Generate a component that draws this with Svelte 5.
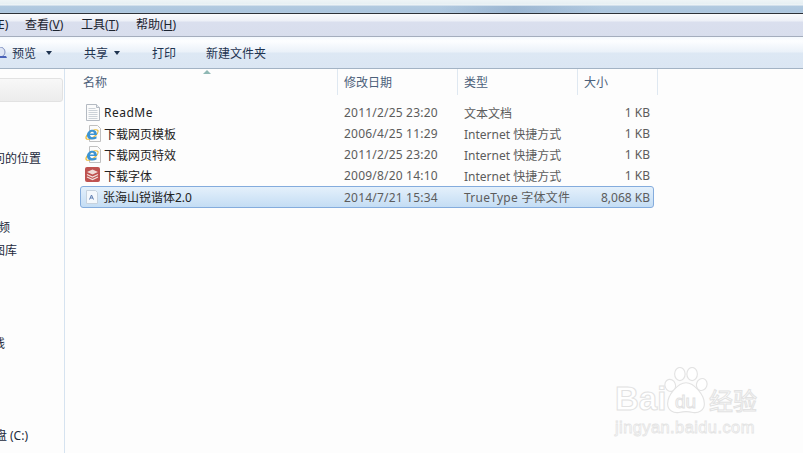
<script>
	// file list shown in the explorer pane
	let files = [
		{ name: 'ReadMe', date: '2011/2/25 23:20', type: '文本文档', size: '1 KB', icon: 'doc', latin: true },
		{ name: '下载网页模板', date: '2006/4/25 11:29', type: 'Internet 快捷方式', size: '1 KB', icon: 'ie' },
		{ name: '下载网页特效', date: '2011/2/25 23:20', type: 'Internet 快捷方式', size: '1 KB', icon: 'ie' },
		{ name: '下载字体', date: '2009/8/20 14:10', type: 'Internet 快捷方式', size: '1 KB', icon: 'rar' },
		{ name: '张海山锐谐体2.0', date: '2014/7/21 15:34', type: 'TrueType 字体文件', size: '8,068 KB', icon: 'font', selected: true }
	];

	// the window is cropped on the left, so nav labels start off-screen
	let nav = [
		{ label: '最近访问的位置', top: 150, width: 41 },
		{ label: '视频', top: 219, width: 10 },
		{ label: '图库', top: 242, width: 17 },
		{ label: '离线', top: 335, width: 5 },
		{ label: '本地磁盘 (C:)', top: 427, width: 28 }
	];
</script>

<div class="window">
	<div class="titlebar"></div>

	<div class="menubar">
		<span class="cut">E)</span>
		<span class="m1">查看(<u>V</u>)</span>
		<span class="m2">工具(<u>T</u>)</span>
		<span class="m3">帮助(<u>H</u>)</span>
	</div>

	<div class="toolbar">
		<svg class="preview" width="7" height="12" viewBox="0 0 7 12">
			<circle cx="0" cy="5" r="5" fill="#dfe6f4" stroke="#7f8fc0" />
			<path d="M-2 9h8l1 2h-9z" fill="#4a62b8" />
		</svg>
		<span class="t1">预览</span>
		<i class="caret c1"></i>
		<span class="t2">共享</span>
		<i class="caret c2"></i>
		<span class="t3">打印</span>
		<span class="t4">新建文件夹</span>
	</div>

	<div class="body">
		<aside class="sidebar">
			<div class="nav-head"></div>
			{#each nav as item}
				<div class="nav-item" style="top:{item.top - 69}px;width:{item.width}px">{item.label}</div>
			{/each}
		</aside>

		<section class="list">
			<svg class="sort" width="8" height="4" viewBox="0 0 8 4"><path d="M0 4 4 0l4 4z" fill="#8fb8b4" /></svg>
			<div class="header">
				<div class="col name">名称</div>
				<div class="col date">修改日期</div>
				<div class="col type">类型</div>
				<div class="col size">大小</div>
			</div>

			<div class="rows">
				{#each files as f}
					<div class="row" class:selected={f.selected}>
						<div class="cell name">
							<span class="icon">
								{#if f.icon === 'doc'}
									<svg width="16" height="17" viewBox="0 0 16 17">
										<path d="M1.5.5h10l3 3v13h-13z" fill="#fbfbfb" stroke="#b4bac2" />
										<path d="M11.5.5v3h3" fill="#e8ecf0" stroke="#b4bac2" />
										<path d="M3.5 4.5h7M3.5 6.5h9M3.5 8.5h9M3.5 10.5h9M3.5 12.5h9M3.5 14.500h9" stroke="#ccd2d8" />
									</svg>
								{:else if f.icon === 'ie'}
									<svg width="17" height="17" viewBox="0 0 17 17">
										<path d="M4.500.5h8l3 3v13h-11z" fill="#fcfcfc" stroke="#c0c0c0" />
										<ellipse cx="7" cy="9.500" rx="7" ry="3" fill="none" stroke="#e8bc40" stroke-width="1.300" transform="rotate(-35 7 9.500)" />
										<path d="M2 10C2.200 6.500 5 4.500 7.800 4.700 10.500 4.900 12 7 12 10H5C5.200 12.500 8.500 13 11.500 11.200V13.500C7.500 15.700 1.700 14.500 2 10zM5 8.500H9C8.900 6.300 5.200 6.300 5 8.500z" fill="#3c94d4" />
									</svg>
								{:else if f.icon === 'rar'}
									<svg width="16" height="16" viewBox="0 0 16 16">
										<rect x="0" y="0" width="15" height="15" rx="2" fill="#bf5250" />
										<path d="M7.500 2.500 13 5 7.500 7.500 2 5z" fill="#f0dcd8" />
										<path d="M2 7.500 7.500 10 13 7.500M2 10 7.500 12.500 13 10" fill="none" stroke="#f2e2de" stroke-width="1.200" />
									</svg>
								{:else}
									<svg width="16" height="16" viewBox="0 0 16 16">
										<path d="M1.500 1.500h9l2 2v11h-11z" fill="#f4f8fc" stroke="#c6d2de" />
										<path d="M4.500 10.500 6.500 6 8.500 10.500M5.200 9h2.600" fill="none" stroke="#5c7cb0" />
									</svg>
								{/if}
							</span>
							<span class="label" class:latin={f.latin}>{f.name}</span>
						</div>
						<div class="cell date">{f.date}</div>
						<div class="cell type">{f.type}</div>
						<div class="cell size">{f.size}</div>
					</div>
				{/each}
			</div>
		</section>
	</div>

	<div class="watermark">
		<svg class="paw" width="46" height="49" viewBox="0 0 52 56">
			<g fill="#fff" stroke="#e3e3e3" stroke-width="1.300">
				<ellipse cx="8" cy="21" rx="6" ry="7" transform="rotate(-20 8 21)" />
				<ellipse cx="19" cy="8" rx="6" ry="7.500" />
				<ellipse cx="33" cy="8" rx="6" ry="7.500" />
				<ellipse cx="44" cy="20" rx="6" ry="7" transform="rotate(20 44 20)" />
				<path d="M26 18c9 0 21 14 21 24 0 8-7 11-13 10-4-1-12-1-16 0-6 1-13-2-13-10 0-10 12-24 21-24z" />
			</g>
		</svg>
		<span class="wm-bai">Bai</span>
		<span class="wm-du">du</span>
		<span class="wm-cn">经验</span>
		<span class="wm-url">jingyan.baidu.com</span>
	</div>
</div>

<style>
	:global(body) {
		margin: 0;
		background: #fff;
	}

	.window {
		position: relative;
		width: 803px;
		height: 453px;
		overflow: hidden;
		display: flex;
		flex-direction: column;
		font-family: "Noto Sans", "Noto Sans CJK SC", sans-serif;
		font-size: 12px;
		color: #1e2a3a;
		background: #fdfdfd;
	}

	.titlebar {
		height: 14px;
		box-sizing: border-box;
		flex: none;
		background:
			linear-gradient(to right, transparent 55%, rgba(120, 150, 185, 0.35) 64%, transparent 75%) 0 6px / 100% 7px no-repeat,
			linear-gradient(to bottom, #eef4f6 0, #e6eff3 4px, #f2f6f8 5px, #b2cae0 6px, #abc5de 12px, #bcd0e3 13px);
		border-bottom: 1px solid #2c3138;
	}

	.menubar {
		position: relative;
		height: 23px;
		flex: none;
		box-sizing: border-box;
		background: linear-gradient(to bottom, #fafbfd 0, #edf0f7 7px, #dadfee 8px, #d8deed 100%);
		border-bottom: 1px solid #a4adbd;
		display: flex;
		align-items: center;
		line-height: 24px;
		color: #1c2430;
	}

	.menubar span {
		white-space: nowrap;
	}

	.cut {
		margin-left: -2px;
		width: 27px;
	}

	.m1 {
		width: 56px;
	}

	.m2 {
		width: 55px;
	}

	.toolbar {
		height: 32px;
		flex: none;
		box-sizing: border-box;
		background: linear-gradient(to bottom, #f4f9fe 0, #fdfeff 4px, #eaf1f9 15px, #dde8f4 16px, #dbe6f3 100%);
		border-bottom: 1px solid #a3b3c4;
		display: flex;
		align-items: center;
		color: #1e3350;
		white-space: nowrap;
	}

	.preview {
		width: 7px;
		margin-right: 5px;
	}

	.t1 {
		width: 34px;
	}

	.caret {
		width: 0;
		height: 0;
		border-left: 3.5px solid transparent;
		border-right: 3.5px solid transparent;
		border-top: 4px solid #1e3350;
	}

	.c1 {
		margin-right: 32px;
	}

	.t2 {
		width: 30px;
	}

	.c2 {
		margin-right: 32px;
	}

	.t3 {
		width: 54px;
	}

	.body {
		flex: 1;
		display: flex;
		min-height: 0;
	}

	.sidebar {
		position: relative;
		width: 64px;
		flex: none;
		box-sizing: content-box;
		border-right: 1px solid #d6e3f0;
		background: #fdfdfd;
		overflow: hidden;
	}

	.nav-head {
		height: 22px;
		margin: 9px 1px 0 -6px;
		border: 1px solid #e2e2e2;
		border-radius: 3px;
		background: linear-gradient(to bottom, #f8f8f8, #ececec);
	}

	/* labels are cut by the window edge, keep them right aligned against their visible end */
	.nav-item {
		position: absolute;
		left: 0;
		height: 17px;
		line-height: 17px;
		display: flex;
		justify-content: flex-end;
		white-space: nowrap;
		color: #1c2a3c;
	}

	.list {
		position: relative;
		flex: 1;
		padding-left: 15px;
		min-width: 0;
	}

	.sort {
		position: absolute;
		left: 138px;
		top: 1px;
	}

	.header {
		display: flex;
		height: 29px;
		color: #4c607a;
		line-height: 27px;
	}

	.col {
		box-sizing: border-box;
		padding-left: 6px;
		border-right: 1px solid #dfe8f1;
		height: 26px;
	}

	.header .name {
		width: 258px;
		padding-left: 3px;
	}

	.header .date {
		width: 120px;
		padding-left: 6px;
	}

	.header .type {
		width: 120px;
	}

	.header .size {
		width: 80px;
	}

	.rows {
		margin-top: 4px;
		width: 574px;
	}

	.row {
		display: flex;
		height: 21px;
		box-sizing: border-box;
		align-items: center;
		color: #5c5c5c;
		white-space: nowrap;
	}

	.row.selected {
		height: 22px;
		border: 1px solid #84acdd;
		border-radius: 3px;
		background: linear-gradient(to bottom, #e4f0fb, #c4ddf4);
	}

	.cell {
		flex: none;
	}

	.cell.name {
		width: 264px;
		display: flex;
		align-items: center;
		color: #1a1a1a;
	}

	.row.selected .cell.name {
		width: 263px;
	}

	.icon {
		width: 24px;
		padding-left: 5px;
		box-sizing: border-box;
		display: flex;
		height: 17px;
	}

	.row.selected .icon {
		width: 22px;
		padding-left: 4px;
	}

	.row .label {
		color: #222;
	}

	.row .label.latin {
		letter-spacing: 0.5px;
	}

	.cell.date {
		width: 120px;
		letter-spacing: 0.2px;
	}

	.cell.type {
		width: 118px;
	}

	.row.selected .cell.type {
		letter-spacing: 0.25px;
	}

	.cell.size {
		width: 68px;
		text-align: right;
	}

	.watermark {
		position: absolute;
		left: 615px;
		top: 365px;
		width: 160px;
		height: 80px;
		font-family: "Liberation Sans", sans-serif;
		color: #fff;
		-webkit-text-stroke: 1px #e2e2e2;
	}

	.watermark span {
		position: absolute;
		white-space: nowrap;
	}

	.paw {
		position: absolute;
		left: 48px;
		top: 2px;
	}

	.wm-bai {
		left: 0;
		top: 15px;
		font-size: 33px;
		font-weight: 700;
	}

	.wm-du {
		left: 60px;
		top: 26px;
		font-size: 19px;
	}

	.wm-cn {
		left: 94px;
		top: 17px;
		font-size: 24px;
		font-family: "Noto Sans CJK SC", sans-serif;
	}

	.wm-url {
		left: 0;
		top: 53px;
		font-size: 16.500px;
		letter-spacing: 0.400px;
		-webkit-text-stroke: 0.800px #e4e4e4;
	}
</style>
